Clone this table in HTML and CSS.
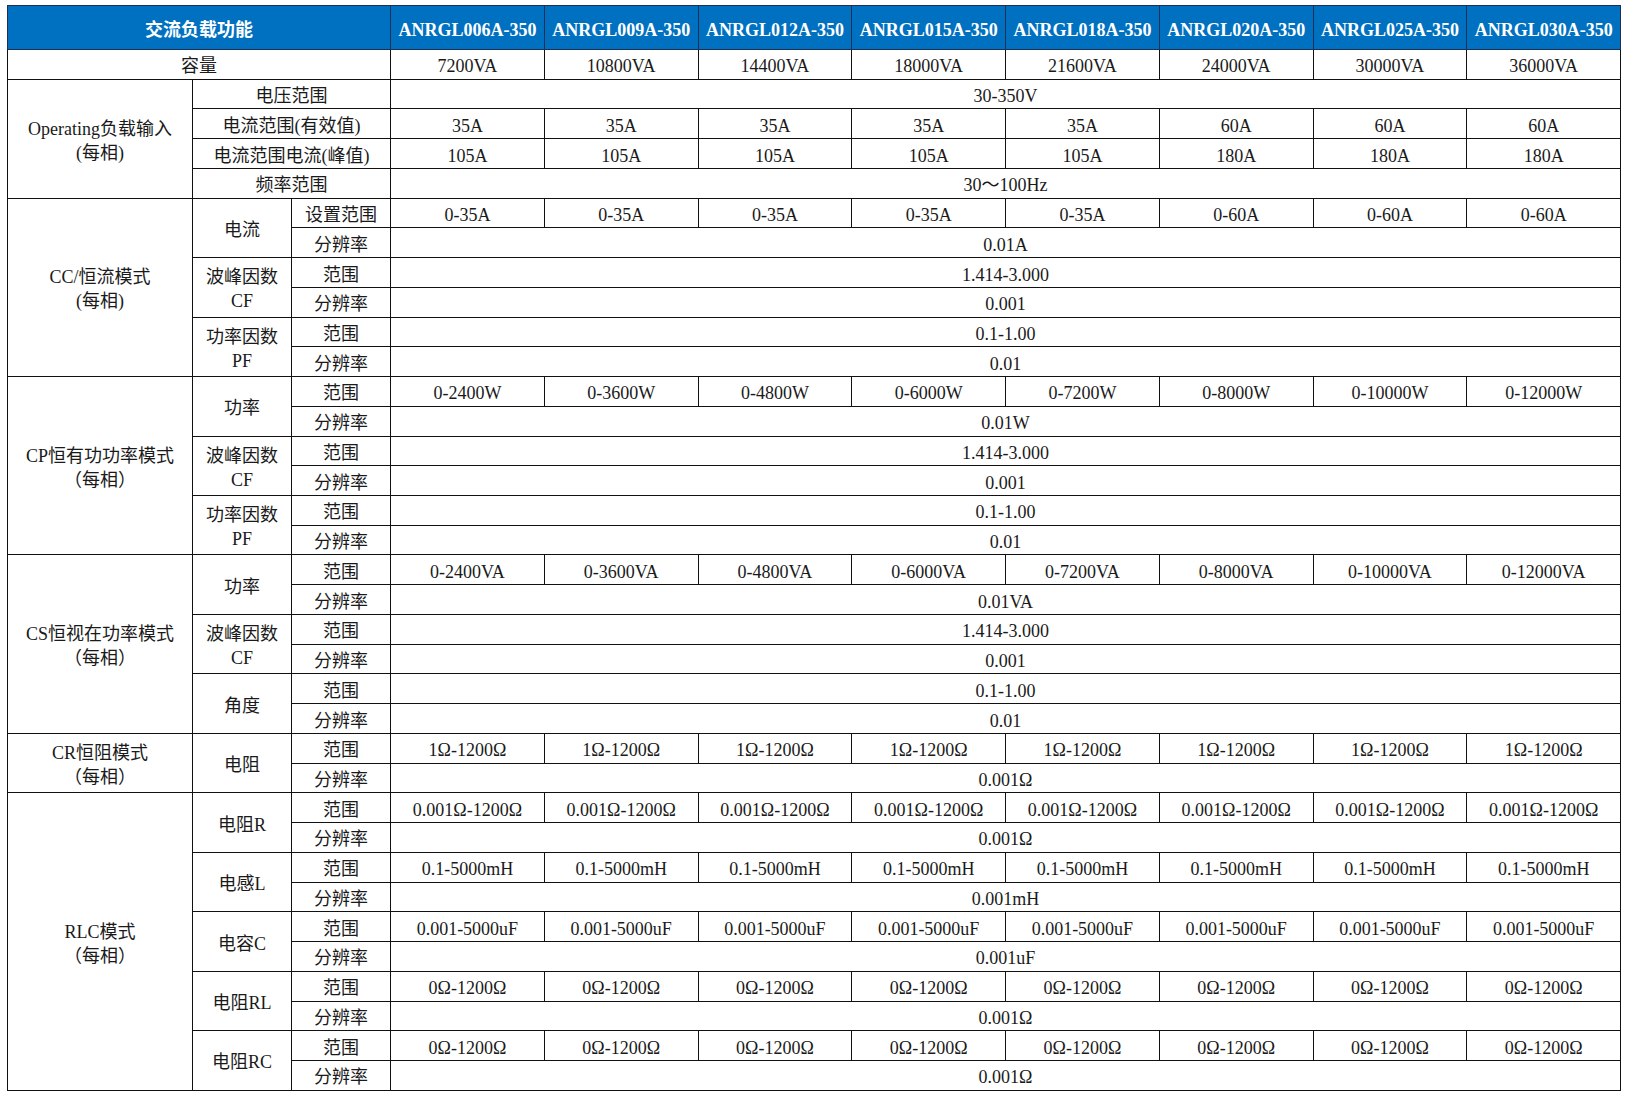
FILE: index.html
```html
<!DOCTYPE html>
<html lang="zh-CN">
<head>
<meta charset="utf-8">
<title>交流负载功能</title>
<link rel="stylesheet" href="styles.css">
</head>
<body>
<table class="spec">
<colgroup>
<col class="c-grp"><col class="c-sub"><col class="c-item">
<col class="c-val"><col class="c-val"><col class="c-val"><col class="c-val">
<col class="c-val"><col class="c-val"><col class="c-val"><col class="c-val">
</colgroup>
<thead>
<tr class="head">
<th colspan="3" class="head-title">交流负载功能</th>
<th>ANRGL006A-350</th><th>ANRGL009A-350</th><th>ANRGL012A-350</th><th>ANRGL015A-350</th>
<th>ANRGL018A-350</th><th>ANRGL020A-350</th><th>ANRGL025A-350</th><th>ANRGL030A-350</th>
</tr>
</thead>
<tbody>
<tr><td colspan="3">容量</td><td>7200VA</td><td>10800VA</td><td>14400VA</td><td>18000VA</td><td>21600VA</td><td>24000VA</td><td>30000VA</td><td>36000VA</td></tr>

<tr><td rowspan="4" class="grp">Operating负载输入<br>(每相)</td><td colspan="2">电压范围</td><td colspan="8">30-350V</td></tr>
<tr><td colspan="2">电流范围(有效值)</td><td>35A</td><td>35A</td><td>35A</td><td>35A</td><td>35A</td><td>60A</td><td>60A</td><td>60A</td></tr>
<tr><td colspan="2">电流范围电流(峰值)</td><td>105A</td><td>105A</td><td>105A</td><td>105A</td><td>105A</td><td>180A</td><td>180A</td><td>180A</td></tr>
<tr><td colspan="2">频率范围</td><td colspan="8">30～100Hz</td></tr>

<tr><td rowspan="6" class="grp">CC/恒流模式<br>(每相)</td><td rowspan="2" class="sub">电流</td><td>设置范围</td><td>0-35A</td><td>0-35A</td><td>0-35A</td><td>0-35A</td><td>0-35A</td><td>0-60A</td><td>0-60A</td><td>0-60A</td></tr>
<tr><td>分辨率</td><td colspan="8">0.01A</td></tr>
<tr><td rowspan="2" class="sub">波峰因数<br>CF</td><td>范围</td><td colspan="8">1.414-3.000</td></tr>
<tr><td>分辨率</td><td colspan="8">0.001</td></tr>
<tr><td rowspan="2" class="sub">功率因数<br>PF</td><td>范围</td><td colspan="8">0.1-1.00</td></tr>
<tr><td>分辨率</td><td colspan="8">0.01</td></tr>

<tr><td rowspan="6" class="grp">CP恒有功功率模式<br>（每相）</td><td rowspan="2" class="sub">功率</td><td>范围</td><td>0-2400W</td><td>0-3600W</td><td>0-4800W</td><td>0-6000W</td><td>0-7200W</td><td>0-8000W</td><td>0-10000W</td><td>0-12000W</td></tr>
<tr><td>分辨率</td><td colspan="8">0.01W</td></tr>
<tr><td rowspan="2" class="sub">波峰因数<br>CF</td><td>范围</td><td colspan="8">1.414-3.000</td></tr>
<tr><td>分辨率</td><td colspan="8">0.001</td></tr>
<tr><td rowspan="2" class="sub">功率因数<br>PF</td><td>范围</td><td colspan="8">0.1-1.00</td></tr>
<tr><td>分辨率</td><td colspan="8">0.01</td></tr>

<tr><td rowspan="6" class="grp">CS恒视在功率模式<br>（每相）</td><td rowspan="2" class="sub">功率</td><td>范围</td><td>0-2400VA</td><td>0-3600VA</td><td>0-4800VA</td><td>0-6000VA</td><td>0-7200VA</td><td>0-8000VA</td><td>0-10000VA</td><td>0-12000VA</td></tr>
<tr><td>分辨率</td><td colspan="8">0.01VA</td></tr>
<tr><td rowspan="2" class="sub">波峰因数<br>CF</td><td>范围</td><td colspan="8">1.414-3.000</td></tr>
<tr><td>分辨率</td><td colspan="8">0.001</td></tr>
<tr><td rowspan="2" class="sub">角度</td><td>范围</td><td colspan="8">0.1-1.00</td></tr>
<tr><td>分辨率</td><td colspan="8">0.01</td></tr>

<tr><td rowspan="2" class="grp">CR恒阻模式<br>（每相）</td><td rowspan="2" class="sub">电阻</td><td>范围</td><td>1Ω-1200Ω</td><td>1Ω-1200Ω</td><td>1Ω-1200Ω</td><td>1Ω-1200Ω</td><td>1Ω-1200Ω</td><td>1Ω-1200Ω</td><td>1Ω-1200Ω</td><td>1Ω-1200Ω</td></tr>
<tr><td>分辨率</td><td colspan="8">0.001Ω</td></tr>

<tr><td rowspan="10" class="grp">RLC模式<br>（每相）</td><td rowspan="2" class="sub">电阻R</td><td>范围</td><td>0.001Ω-1200Ω</td><td>0.001Ω-1200Ω</td><td>0.001Ω-1200Ω</td><td>0.001Ω-1200Ω</td><td>0.001Ω-1200Ω</td><td>0.001Ω-1200Ω</td><td>0.001Ω-1200Ω</td><td>0.001Ω-1200Ω</td></tr>
<tr><td>分辨率</td><td colspan="8">0.001Ω</td></tr>
<tr><td rowspan="2" class="sub">电感L</td><td>范围</td><td>0.1-5000mH</td><td>0.1-5000mH</td><td>0.1-5000mH</td><td>0.1-5000mH</td><td>0.1-5000mH</td><td>0.1-5000mH</td><td>0.1-5000mH</td><td>0.1-5000mH</td></tr>
<tr><td>分辨率</td><td colspan="8">0.001mH</td></tr>
<tr><td rowspan="2" class="sub">电容C</td><td>范围</td><td>0.001-5000uF</td><td>0.001-5000uF</td><td>0.001-5000uF</td><td>0.001-5000uF</td><td>0.001-5000uF</td><td>0.001-5000uF</td><td>0.001-5000uF</td><td>0.001-5000uF</td></tr>
<tr><td>分辨率</td><td colspan="8">0.001uF</td></tr>
<tr><td rowspan="2" class="sub">电阻RL</td><td>范围</td><td>0Ω-1200Ω</td><td>0Ω-1200Ω</td><td>0Ω-1200Ω</td><td>0Ω-1200Ω</td><td>0Ω-1200Ω</td><td>0Ω-1200Ω</td><td>0Ω-1200Ω</td><td>0Ω-1200Ω</td></tr>
<tr><td>分辨率</td><td colspan="8">0.001Ω</td></tr>
<tr><td rowspan="2" class="sub">电阻RC</td><td>范围</td><td>0Ω-1200Ω</td><td>0Ω-1200Ω</td><td>0Ω-1200Ω</td><td>0Ω-1200Ω</td><td>0Ω-1200Ω</td><td>0Ω-1200Ω</td><td>0Ω-1200Ω</td><td>0Ω-1200Ω</td></tr>
<tr><td>分辨率</td><td colspan="8">0.001Ω</td></tr>
</tbody>
</table>
</body>
</html>
```
FILE: styles.css
```css
html, body {
  margin: 0;
  padding: 0;
  background: #ffffff;
}

body {
  padding: 5px 0 0 7px;
  font-family: "Liberation Serif", "Noto Sans CJK SC", serif;
  font-size: 18px;
  color: #1a1a1a;
}

.spec {
  border-collapse: collapse;
  table-layout: fixed;
  width: 1613px;
  border: 1px solid #555;
}

.c-grp { width: 185px; }
.c-sub { width: 99px; }
.c-item { width: 99px; }
.c-val { width: 153.75px; }

.spec th,
.spec td {
  border: 1px solid #111;
  padding: 4px 0 0;
  text-align: center;
  vertical-align: middle;
  white-space: nowrap;
  line-height: 20px;
}

.spec thead tr.head {
  height: 44px;
}

.spec th {
  background: #0070c0;
  color: #ffffff;
  font-weight: bold;
  font-size: 18px;
  border-color: #1c2f55;
  padding-top: 5px;
}

.spec tbody tr {
  height: 29.74px;
}

.spec td.grp,
.spec td.sub {
  line-height: 24px;
}
```
